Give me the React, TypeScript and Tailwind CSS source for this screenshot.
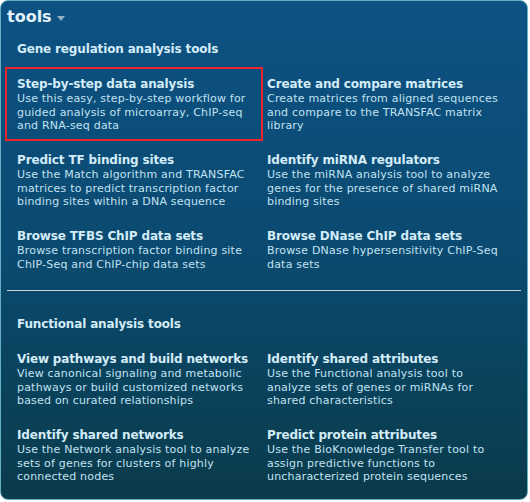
import React from "react";

interface Tool {
  title: string;
  text: string;
  highlight?: boolean;
}

const geneTools: Tool[] = [
  {
    title: "Step-by-step data analysis",
    text: "Use this easy, step-by-step workflow for guided analysis of microarray, ChIP-seq and RNA-seq data",
    highlight: true,
  },
  {
    title: "Create and compare matrices",
    text: "Create matrices from aligned sequences and compare to the TRANSFAC matrix library",
  },
  {
    title: "Predict TF binding sites",
    text: "Use the Match algorithm and TRANSFAC matrices to predict transcription factor binding sites within a DNA sequence",
  },
  {
    title: "Identify miRNA regulators",
    text: "Use the miRNA analysis tool to analyze genes for the presence of shared miRNA binding sites",
  },
  {
    title: "Browse TFBS ChIP data sets",
    text: "Browse transcription factor binding site ChIP-Seq and ChIP-chip data sets",
  },
  {
    title: "Browse DNase ChIP data sets",
    text: "Browse DNase hypersensitivity ChIP-Seq data sets",
  },
];

const functionalTools: Tool[] = [
  {
    title: "View pathways and build networks",
    text: "View canonical signaling and metabolic pathways or build customized networks based on curated relationships",
  },
  {
    title: "Identify shared attributes",
    text: "Use the Functional analysis tool to analyze sets of genes or miRNAs for shared characteristics",
  },
  {
    title: "Identify shared networks",
    text: "Use the Network analysis tool to analyze sets of genes for clusters of highly connected nodes",
  },
  {
    title: "Predict protein attributes",
    text: "Use the BioKnowledge Transfer tool to assign predictive functions to uncharacterized protein sequences",
  },
];

const ToolItem = ({ tool }: { tool: Tool }) => (
  <div className="relative pr-[8px]">
    {tool.highlight && (
      <div className="absolute -left-[12px] -top-[9px] right-[4px] -bottom-[8px] border-2 border-[#e8262c]" />
    )}
    <h3 className="text-[12px] font-bold leading-[16px] tracking-[-0.15px] text-[#d3ecf7]">
      {tool.title}
    </h3>
    <p className="text-[11px] leading-[13.5px] tracking-[0.2px] text-[#c2e2f2]">
      {tool.text}
    </p>
  </div>
);

const Section = ({ heading, tools }: { heading: string; tools: Tool[] }) => (
  <div className="flex flex-col gap-[19px] pl-[16px]">
    <h2 className="text-[12px] font-bold leading-[16px] tracking-[-0.15px] text-[#d3ecf7]">
      {heading}
    </h2>
    <div className="grid grid-cols-[250px_250px] gap-y-[19.5px]">
      {tools.map((t) => (
        <ToolItem key={t.title} tool={t} />
      ))}
    </div>
  </div>
);

export default function App() {
  return (
    <div
      className="w-[530px] h-[502px] bg-white"
      style={{ fontFamily: '"DejaVu Sans", Verdana, sans-serif' }}
    >
      <div className="w-[528px] h-[500px] rounded-[8px] border border-[#66afc4] bg-linear-to-b from-[#0d5284] via-[#0b4a70] to-[#0a3b4b] pt-[6px]">
        <div className="flex items-center gap-[5px] pl-[6px]">
          <span className="text-[16px] font-bold leading-[20px] text-[#e2f2fa]">
            tools
          </span>
          <svg width="8" height="5" viewBox="0 0 8 5" className="mt-[3px]">
            <path d="M0 0 L8 0 L4 5 Z" fill="#8fb0c6" />
          </svg>
        </div>
        <div className="mt-[14px]">
          <Section heading="Gene regulation analysis tools" tools={geneTools} />
        </div>
        <div className="mx-[6px] mt-[19px] h-px bg-[#c9d9e0]" />
        <div className="mt-[25px]">
          <Section heading="Functional analysis tools" tools={functionalTools} />
        </div>
      </div>
    </div>
  );
}
